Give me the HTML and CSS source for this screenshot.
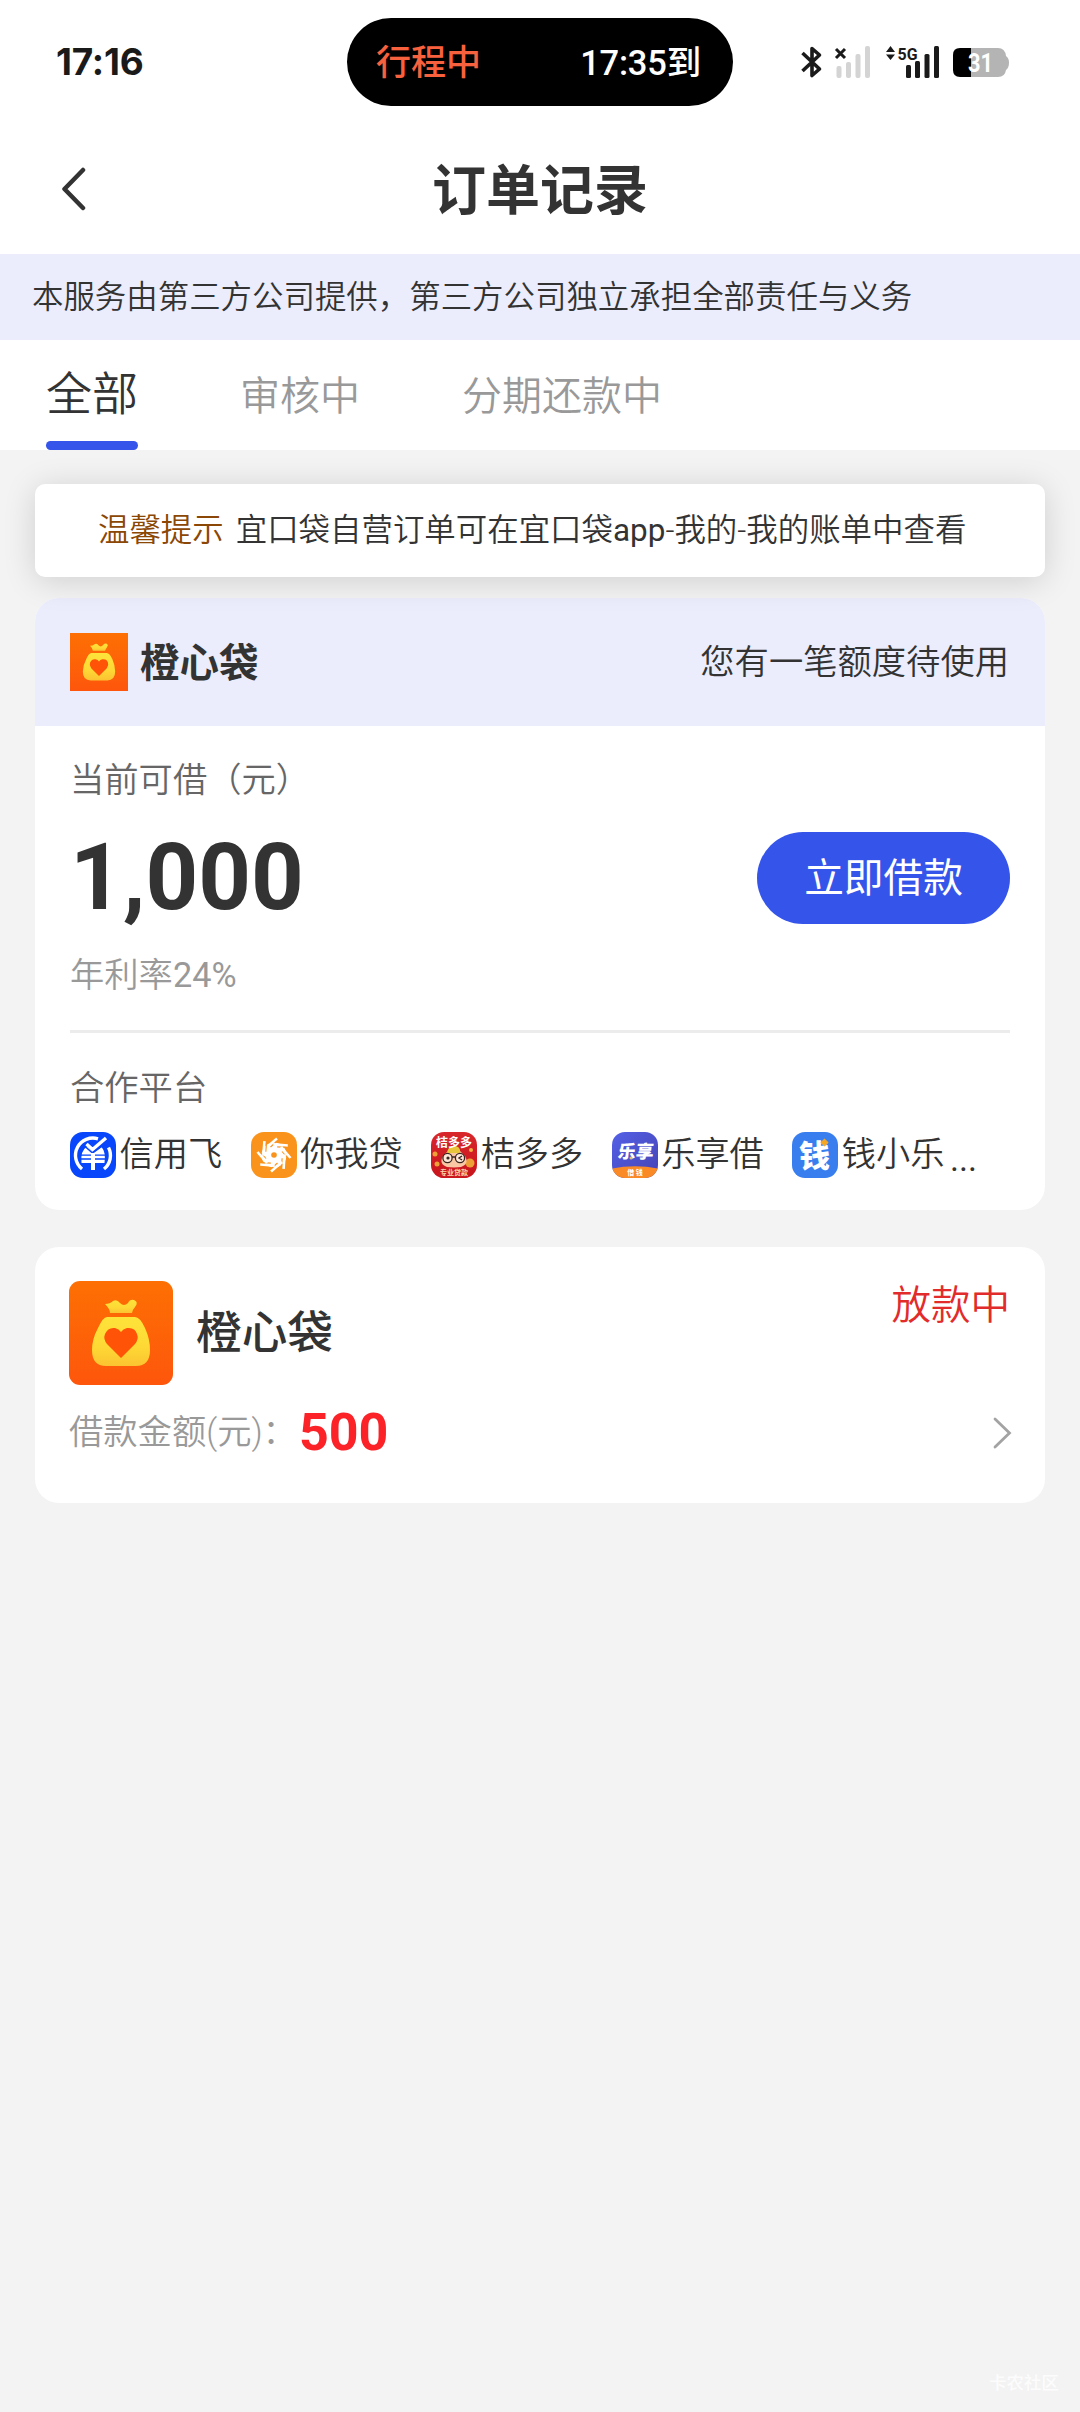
FILE: index.html
```html
<!DOCTYPE html>
<html lang="zh-CN">
<head>
<meta charset="utf-8">
<title>订单记录</title>
<link rel="stylesheet" href="styles.css">
</head>
<body>
<svg class="defs" width="0" height="0" aria-hidden="true">
  <defs>
    <linearGradient id="bagBg" x1="0" y1="0" x2="0" y2="1"><stop offset="0" stop-color="#fd7003"/><stop offset="1" stop-color="#fe560c"/></linearGradient>
    <linearGradient id="bagFill" x1="0" y1="0" x2="0" y2="1"><stop offset="0" stop-color="#fde33a"/><stop offset=".6" stop-color="#fed935"/><stop offset="1" stop-color="#fbc331"/></linearGradient>
    <linearGradient id="redBg" x1="0" y1="0" x2="0" y2="1"><stop offset="0" stop-color="#d8282c"/><stop offset="1" stop-color="#c8141c"/></linearGradient>
    <linearGradient id="purpleBg" x1="0" y1="0" x2="1" y2="1"><stop offset="0" stop-color="#5360e6"/><stop offset="1" stop-color="#4543b4"/></linearGradient>
    <symbol id="bag" viewBox="0 0 104 104">
      <rect width="104" height="104" fill="url(#bagBg)"/>
      <path d="M36 23Q41 23 44 20Q48 18 51 22Q55 26 59 22Q61 18 65 19Q70 21 66 26Q64 28 63 32H41Q41 28 36 23Z" fill="url(#bagFill)"/>
      <path d="M38 36H66Q71 36 76 47Q81 58 81 69Q81 85 67 85H37Q23 85 23 69Q23 58 29 47Q34 36 38 36Z" fill="url(#bagFill)"/>
      <path d="M52 77L38 63Q34 58 36 53Q39 46 46 47Q50 48 52 51Q54 48 58 47Q66 46 68 53Q70 58 66 63Z" fill="#ff5307"/>
    </symbol>
  </defs>
</svg>

<div class="status-bar">
  <span class="clock">17:16</span>
  <div class="island"><span class="trip">行程中</span><span class="eta">17:35到</span></div>
  <svg class="status-icons" width="210" height="40" viewBox="0 0 210 40">
    <path d="M2.500 13L19.500 29L12 35.500V8.500L19.500 15L2.500 31" fill="none" stroke="#1a1a1a" stroke-width="3.600" stroke-linejoin="round"/>
    <path d="M36 9L45 18M45 9L36 18" stroke="#1a1a1a" stroke-width="3"/>
    <g fill="#d4d4d4"><rect x="36.500" y="26" width="5" height="12" rx="2"/><rect x="46" y="22" width="5" height="16" rx="2"/><rect x="55.500" y="14" width="5" height="24" rx="2"/><rect x="65" y="6" width="5" height="32" rx="2"/></g>
    <path d="M86 12L90.500 6L95 12ZM86 14.500L90.500 20L95 14.500Z" fill="#1a1a1a"/>
    <text x="97.500" y="19.500" class="net-label" textLength="20" lengthAdjust="spacingAndGlyphs">5G</text>
    <g fill="#1a1a1a"><rect x="106" y="25" width="5" height="13" rx="1.500"/><rect x="115" y="21" width="5" height="17" rx="1.500"/><rect x="124.500" y="14" width="5" height="24" rx="1.500"/><rect x="134" y="6" width="5" height="32" rx="1.500"/></g>
    <path d="M171 8H198Q205 8 206 16Q209 18 209 22.500Q209 28 206 30Q205 37 198 37H171Z" fill="#b4b4b4"/>
    <path d="M171 8H160Q153 8 153 15V30Q153 37 160 37H171Z" fill="#000"/>
    <text x="180.500" y="32" class="battery-label" textLength="25" lengthAdjust="spacingAndGlyphs">31</text>
  </svg>
</div>

<header class="nav">
  <svg class="back" width="26" height="44" viewBox="0 0 26 44"><path d="M22 3L3.500 22L22 41" fill="none" stroke="#333" stroke-width="4.500" stroke-linecap="round" stroke-linejoin="round"/></svg>
  <h1 class="title">订单记录</h1>
</header>

<div class="notice">本服务由第三方公司提供，第三方公司独立承担全部责任与义务</div>

<nav class="tabs">
  <span class="tab active">全部</span>
  <span class="tab">审核中</span>
  <span class="tab">分期还款中</span>
</nav>

<main class="content">
  <div class="tip"><span class="tip-label">温馨提示</span><span>宜口袋自营订单可在宜口袋<span class="latin">app</span>-我的-我的账单中查看</span></div>

  <section class="card offer">
    <div class="offer-head">
      <svg width="58" height="58"><use href="#bag"/></svg>
      <span class="offer-name">橙心袋</span>
      <span class="offer-hint">您有一笔额度待使用</span>
    </div>
    <div class="offer-body">
      <div class="label">当前可借（元）</div>
      <div class="amount-row">
        <span class="amount">1,000</span>
        <button class="borrow">立即借款</button>
      </div>
      <div class="rate">年利率<span class="latin">24%</span></div>
      <div class="divider"></div>
      <div class="label partner-label">合作平台</div>
      <div class="partners">
        <div class="partner">
          <svg class="picon" viewBox="0 0 46 46">
            <rect width="46" height="46" fill="#0746fa"/>
            <path d="M12 37A17.400 17.400 0 0 1 28 6.800M38.500 15.500A17.400 17.400 0 0 1 34 37" fill="none" stroke="#fff" stroke-width="3.400"/>
            <path d="M11.500 31Q10 19 17 14.500L23 21L31.500 15Q36 20 34.500 31Z" fill="#fff"/>
            <path d="M10 23.200H36M10 27H36" stroke="#0746fa" stroke-width="1.300"/>
            <path d="M14 13.500L22.500 21L34 12.500" fill="none" stroke="#0746fa" stroke-width="1.600"/>
            <path d="M16.500 12L22.500 17.500L36 6" fill="none" stroke="#fff" stroke-width="3.400"/>
            <path d="M23 21V38" stroke="#fff" stroke-width="4"/>
          </svg><span>信用飞</span>
        </div>
        <div class="partner">
          <svg class="picon" viewBox="0 0 46 46">
            <rect width="46" height="46" fill="#fa931b"/>
            <circle cx="23" cy="23" r="12.500" fill="#fff"/>
            <g fill="none">
              <g id="blade"><path d="M15 16L26 6.500" stroke="#fff" stroke-width="2.600"/><path d="M19.500 15L27.500 8" stroke="#fa931b" stroke-width="1.100"/></g>
              <use href="#blade" transform="rotate(45 23 23)"/><use href="#blade" transform="rotate(90 23 23)"/><use href="#blade" transform="rotate(135 23 23)"/><use href="#blade" transform="rotate(180 23 23)"/><use href="#blade" transform="rotate(225 23 23)"/><use href="#blade" transform="rotate(270 23 23)"/><use href="#blade" transform="rotate(315 23 23)"/>
            </g>
            <circle cx="23" cy="23" r="2.800" fill="#fa931b"/>
          </svg><span>你我贷</span>
        </div>
        <div class="partner">
          <svg class="picon" viewBox="0 0 46 46">
            <rect width="46" height="46" fill="url(#redBg)"/>
            <circle cx="4" cy="22" r="2.500" fill="#eda035"/><circle cx="39" cy="31" r="4.500" fill="#eda035"/><circle cx="40" cy="18" r="2" fill="#f2b03f"/><circle cx="6" cy="32" r="2.500" fill="#eda035"/>
            <path d="M17 19Q23 9 29 19L34 24Q40 35 23 36Q6 35 12 24Z" fill="#f9c7a3"/>
            <path d="M16 21Q17 14 23 14Q30 14 29 21Z" fill="#e7c63b"/>
            <circle cx="16.500" cy="26" r="4.600" fill="#fbe6d8" stroke="#39251f" stroke-width="1.300"/><circle cx="29" cy="26" r="4.600" fill="#fbe6d8" stroke="#39251f" stroke-width="1.300"/>
            <circle cx="17" cy="26" r="1.600" fill="#39251f"/><path d="M31 24L28 26L31 28M21 25H24" fill="none" stroke="#39251f" stroke-width="1.400"/>
            <path d="M8 35.500H38V46H8Z" fill="#cb1920"/>
            <text x="23" y="14.500" class="ic-juzi" textLength="36">桔多多</text>
            <text x="23" y="43" class="ic-loan">专业贷款</text>
          </svg><span>桔多多</span>
        </div>
        <div class="partner">
          <svg class="picon" viewBox="0 0 46 46">
            <rect width="46" height="46" fill="url(#purpleBg)"/>
            <path d="M0 36.500Q23 32 46 36.500V46H0Z" fill="#f98a26"/>
            <text x="26" y="26.500" class="ic-lexiang" transform="skewX(-6)">乐享</text>
            <text x="23" y="43" class="ic-jieqian">借 钱</text>
            <circle cx="19" cy="26" r="1.500" fill="#d8c07a"/>
          </svg><span>乐享借</span>
        </div>
        <div class="partner">
          <svg class="picon" viewBox="0 0 46 46">
            <rect width="46" height="46" fill="#387eee"/>
            <text x="22.500" y="34.500" class="ic-qian">钱</text>
            <path d="M32.500 7.500L35.500 10.500L32.500 13.500L29.500 10.500Z" fill="#f5a623" stroke="#f5a623" stroke-width="1.500"/>
          </svg><span>钱小乐</span>
        </div>
        <span class="more">...</span>
      </div>
    </div>
  </section>

  <section class="card order">
    <div class="order-head">
      <svg class="order-logo" width="104" height="104"><use href="#bag"/></svg>
      <span class="order-name">橙心袋</span>
      <span class="order-status">放款中</span>
    </div>
    <div class="order-row">
      <span class="order-label">借款金额(元)：</span>
      <span class="order-amount">500</span>
      <svg class="chevron" width="20" height="34" viewBox="0 0 20 34"><path d="M3 3L17.500 17L3 31" fill="none" stroke="#a3a3a3" stroke-width="2.800" stroke-linecap="round"/></svg>
    </div>
  </section>
</main>
<footer class="watermark">卡农社区</footer>
</body>
</html>
```
FILE: styles.css
```css
* { box-sizing: border-box; }
body {
  margin: 0;
  width: 1080px;
  height: 2412px;
  display: flex;
  flex-direction: column;
  background: #f3f3f3;
  color: #333;
  font-family: Roboto, "Noto Sans CJK SC", sans-serif;
  font-size: 34px;
  font-weight: 350;
  line-height: 1.2;
  white-space: nowrap;
  overflow: hidden;
}
.latin { font-weight: 400; }
.defs { position: absolute; }
svg { display: block; flex: none; }

.status-bar {
  height: 120px;
  padding: 18px 70px 0 56px;
  background: #fff;
  display: grid;
  grid-template-columns: 291px 386px 67px 210px;
}
.clock {
  font-family: Inter, sans-serif;
  font-size: 37px;
  font-weight: 650;
  line-height: 88px;
  letter-spacing: -0.2px;
  color: #1a1a1a;
}
.island {
  height: 88px;
  padding: 3px 32px 0 29px;
  border-radius: 44px;
  background: #000;
  display: flex;
  justify-content: space-between;
  align-items: center;
  font-size: 35px;
}
.trip { color: #f8613e; font-weight: 500; }
.eta { color: #fff; font-weight: 500; font-size: 34.500px; letter-spacing: -0.2px; }
.status-icons { grid-column: 4; margin: 22px 0 0 0; }
.net-label { font: 700 17px Roboto, sans-serif; fill: #1a1a1a; }
.battery-label { font: 700 25px Roboto, sans-serif; fill: #fff; text-anchor: middle; }

.nav {
  height: 134px;
  padding: 0 61px;
  background: #fff;
  display: grid;
  grid-template-columns: 26px 1fr 26px;
}
.back { margin-top: 47px; }
.title {
  margin: 0;
  font-size: 54px;
  font-weight: 700;
  line-height: 143px;
  text-align: center;
}

.notice {
  height: 86px;
  padding-left: 32px;
  background: #ebedfc;
  font-size: 31.450px;
  line-height: 88px;
}

.tabs {
  height: 110px;
  padding-left: 46px;
  background: #fff;
  display: flex;
  gap: 102px;
}
.tab { font-size: 40px; line-height: 113px; color: #999; }
.tab.active {
  display: flex;
  flex-direction: column;
  justify-content: space-between;
  padding-top: 7px;
  font-size: 46px;
  line-height: 94px;
  color: #333;
}
.tab.active::after {
  content: "";
  height: 9px;
  border-radius: 4.500px;
  background: #3554e9;
}

.content {
  padding: 34px 35px 0;
  display: flex;
  flex-direction: column;
}
.tip {
  z-index: 1;
  height: 93px;
  padding-left: 63px;
  border-radius: 10px;
  background: #fff;
  box-shadow: 0 4px 32px rgba(0, 0, 0, 0.15);
  display: flex;
  align-items: center;
  gap: 12px;
  font-size: 31.450px;
}
.tip-label { color: #8b4705; }

.card { border-radius: 24px; background: #fff; overflow: hidden; }

.offer { height: 612px; margin-top: 21px; }
.offer-head {
  height: 128px;
  padding: 0 36px 0 35px;
  background: #ebedfc;
  display: flex;
  align-items: center;
}
.offer-name { margin: 3px 0 0 12px; font-size: 39.500px; font-weight: 700; }
.offer-hint { margin: 1px 0 0 auto; font-size: 34.300px; }
.offer-body { padding: 34px 35px 0; display: flex; flex-direction: column; }
.label { height: 42px; line-height: 40px; font-size: 34.300px; color: #666; }
.amount-row {
  height: 92px;
  margin-top: 30px;
  display: flex;
  align-items: center;
  justify-content: space-between;
}
.amount { font-size: 92px; font-weight: 700; line-height: 92px; }
.borrow {
  width: 253px;
  height: 92px;
  padding: 2px 0 0;
  border: 0;
  border-radius: 46px;
  background: #3554e9;
  color: #fff;
  font: 400 39.700px/90px Roboto, "Noto Sans CJK SC", sans-serif;
}
.rate { margin-top: 29px; height: 44px; line-height: 44px; font-size: 34.300px; color: #999; }
.divider { height: 3px; margin-top: 33px; background: #ececec; }
.partner-label { margin-top: 34px; line-height: 42px; }
.partners { margin-top: 20px; display: flex; align-items: center; gap: 28.500px; font-size: 34.200px; }
.partner { display: flex; align-items: center; gap: 3.500px; }
.picon { width: 46px; height: 46px; border-radius: 13px; }
.more { margin: 10px 0 0 -23px; font-weight: 400; }
.picon text { font-family: "Noto Sans CJK SC", sans-serif; font-weight: 700; fill: #fff; text-anchor: middle; }
.picon .ic-juzi { font-size: 12px; }
.picon .ic-loan { font-size: 7px; fill: #fbd7a8; }
.picon .ic-lexiang { font-size: 18px; font-weight: 900; }
.picon .ic-jieqian { font-size: 7px; }
.picon .ic-qian { font-size: 31px; font-weight: 900; }

.order { height: 256px; margin-top: 37px; padding: 34px 34px 0; }
.order-head { height: 104px; display: flex; align-items: center; }
.order-logo { border-radius: 11px; }
.order-name { margin: 2px 0 0 23px; font-size: 45.700px; font-weight: 500; }
.order-status { margin: 1px 1px 0 auto; align-self: flex-start; font-size: 39.500px; color: #e22c2c; }
.order-row { height: 64px; margin-top: 16px; display: flex; align-items: center; }
.order-label { color: #999; font-size: 34.300px; }
.order-amount { margin-left: 2px; color: #fb2228; font-size: 52px; font-weight: 700; }
.chevron { margin: 0 -1px 0 auto; }

.watermark {
  margin: auto 21px 18px auto;
  font-size: 17.500px;
  font-weight: 500;
  color: #fcfcfc;
}
```
